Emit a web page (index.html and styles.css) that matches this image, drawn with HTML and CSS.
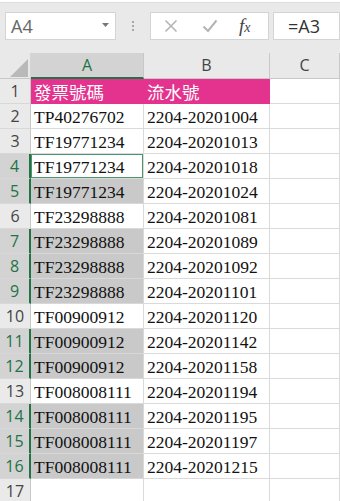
FILE: index.html
```html
<!DOCTYPE html>
<html>
<head lang="zh-Hant">
    <meta charset="UTF-8">
    <title>Sheet</title>
    <link rel="stylesheet" href="styles.css">
</head>
<body>
<div class="toolbar">
    <div class="namebox">
        <span>A4</span>
        <svg class="caret" width="7" height="4" viewBox="0 0 7 4"><path d="M0 0h7L3.5 4z" fill="#777"/></svg>
    </div>
    <div class="dots"><i></i><i></i><i></i></div>
    <div class="fxbox">
        <svg width="14" height="14" viewBox="0 0 14 14"><path d="M1.5 1.5l11 11M12.5 1.5l-11 11" stroke="#b4b4b4" stroke-width="1.6" fill="none"/></svg>
        <svg width="16" height="14" viewBox="0 0 16 14"><path d="M1.5 7.5l4.5 4.5L14.5 1.5" stroke="#b4b4b4" stroke-width="2" fill="none"/></svg>
        <span class="fx">f<sub>x</sub></span>
    </div>
    <div class="formula">=A3</div>
</div>
<div class="sheet">
    <div class="corner"><svg width="31" height="26" viewBox="0 0 31 26"><path d="M10 24H28V6z" fill="#b9b9b9"/></svg></div>
    <div class="colhead active">A</div>
    <div class="colhead">B</div>
    <div class="colhead">C</div>

    <div class="rowhead">1</div>
    <div class="cell pink cjk">發票號碼</div>
    <div class="cell pink cjk">流水號</div>
    <div class="cell"></div>

    <div class="rowhead">2</div>
    <div class="cell">TP40276702</div>
    <div class="cell">2204-20201004</div>
    <div class="cell"></div>

    <div class="rowhead">3</div>
    <div class="cell">TF19771234</div>
    <div class="cell">2204-20201013</div>
    <div class="cell"></div>

    <div class="rowhead sel">4</div>
    <div class="cell current">TF19771234</div>
    <div class="cell">2204-20201018</div>
    <div class="cell"></div>

    <div class="rowhead sel">5</div>
    <div class="cell picked">TF19771234</div>
    <div class="cell">2204-20201024</div>
    <div class="cell"></div>

    <div class="rowhead">6</div>
    <div class="cell">TF23298888</div>
    <div class="cell">2204-20201081</div>
    <div class="cell"></div>

    <div class="rowhead sel">7</div>
    <div class="cell picked">TF23298888</div>
    <div class="cell">2204-20201089</div>
    <div class="cell"></div>

    <div class="rowhead sel">8</div>
    <div class="cell picked">TF23298888</div>
    <div class="cell">2204-20201092</div>
    <div class="cell"></div>

    <div class="rowhead sel">9</div>
    <div class="cell picked">TF23298888</div>
    <div class="cell">2204-20201101</div>
    <div class="cell"></div>

    <div class="rowhead">10</div>
    <div class="cell">TF00900912</div>
    <div class="cell">2204-20201120</div>
    <div class="cell"></div>

    <div class="rowhead sel">11</div>
    <div class="cell picked">TF00900912</div>
    <div class="cell">2204-20201142</div>
    <div class="cell"></div>

    <div class="rowhead sel">12</div>
    <div class="cell picked">TF00900912</div>
    <div class="cell">2204-20201158</div>
    <div class="cell"></div>

    <div class="rowhead">13</div>
    <div class="cell">TF008008111</div>
    <div class="cell">2204-20201194</div>
    <div class="cell"></div>

    <div class="rowhead sel">14</div>
    <div class="cell picked">TF008008111</div>
    <div class="cell">2204-20201195</div>
    <div class="cell"></div>

    <div class="rowhead sel">15</div>
    <div class="cell picked">TF008008111</div>
    <div class="cell">2204-20201197</div>
    <div class="cell"></div>

    <div class="rowhead sel">16</div>
    <div class="cell picked">TF008008111</div>
    <div class="cell">2204-20201215</div>
    <div class="cell"></div>

    <div class="rowhead">17</div>
    <div class="cell"></div>
    <div class="cell"></div>
    <div class="cell"></div>
</div>
</body>
</html>
```
FILE: styles.css
```css
*{
    margin: 0;
    padding: 0;
    box-sizing: border-box;
}
body{
    width: 340px;
    overflow: hidden;
    background: #fff;
    font-family: "Open Sans", "Noto Sans", sans-serif;
}
.toolbar{
    height: 51px;
    background: #e9e9e9;
    border-top: 1px solid #dcdcdc;
    margin-top: 2px;
    padding: 9px 0 0 5px;
    display: flex;
    align-items: flex-start;
    white-space: nowrap;
}
.namebox{
    width: 111px;
    height: 28px;
    background: #fff;
    border: 1px solid #d4d4d4;
    display: flex;
    align-items: center;
    justify-content: space-between;
    padding: 0 6px 0 5px;
    font-size: 18px;
    color: #666;
}
.caret{
    margin-top: -2px;
}
.dots{
    width: 34px;
    height: 28px;
    display: flex;
    flex-direction: column;
    align-items: center;
    justify-content: center;
    gap: 2px;
}
.dots i{
    display: block;
    width: 2px;
    height: 2px;
    background: #a8a8a8;
}
.fxbox{
    width: 119px;
    height: 28px;
    background: #fff;
    border: 1px solid #d4d4d4;
    display: flex;
    align-items: center;
    padding: 0 0 0 13px;
    gap: 24px;
}
.fx{
    font-family: "Liberation Serif", serif;
    font-style: italic;
    font-size: 19px;
    color: #444;
    margin-left: -3px;
}
.fx sub{
    font-size: 14px;
    vertical-align: 0;
}
.formula{
    height: 28px;
    background: #fff;
    border: 1px solid #d4d4d4;
    margin-left: 4px;
    flex: 1;
    padding-left: 14px;
    font-size: 18px;
    line-height: 26px;
    color: #333;
}
.sheet{
    display: grid;
    grid-template-columns: 31px 113px 126px 70px;
    grid-template-rows: 26px;
    grid-auto-rows: 25px;
}
.corner{
    background: #e9e9e9;
    border-right: 1px solid #d4d4d4;
    border-bottom: 1px solid #c8c8c8;
}
.corner svg{
    display: block;
}
.colhead{
    background: #e9e9e9;
    border-right: 1px solid #c8c8c8;
    border-bottom: 1px solid #c8c8c8;
    text-align: center;
    font-size: 16px;
    line-height: 25px;
    color: #444;
}
.colhead.active{
    background: #d3d3d3;
    color: #217346;
    border-bottom: 2px solid #217346;
}
.rowhead{
    background: #eaeaea;
    border-right: 1px solid #c8c8c8;
    border-bottom: 1px solid #d8d8d8;
    text-align: center;
    font-size: 16px;
    line-height: 25px;
    color: #444;
}
.rowhead.sel{
    background: #d3d3d3;
    color: #217346;
    border-right: 2px solid #217346;
}
.cell{
    border-right: 1px solid #dadada;
    border-bottom: 1px solid #dadada;
    padding: 1px 0 0 3px;
    font-family: "Liberation Serif", "Noto Sans CJK TC", serif;
    font-size: 17.5px;
    line-height: 24px;
    color: #111;
    white-space: nowrap;
    overflow: hidden;
}
.cell.pink{
    background: #e3338e;
    border-color: #e3338e;
    color: #fff;
}
.cell.cjk{
    font-family: "Noto Sans CJK TC", sans-serif;
    font-size: 17.5px;
    line-height: 23px;
}
.cell.picked{
    background: #c9c9c9;
    border-color: #d8d8d8;
}
.cell.current{
    box-shadow: inset 0 0 0 1px #4d9470;
}
```
